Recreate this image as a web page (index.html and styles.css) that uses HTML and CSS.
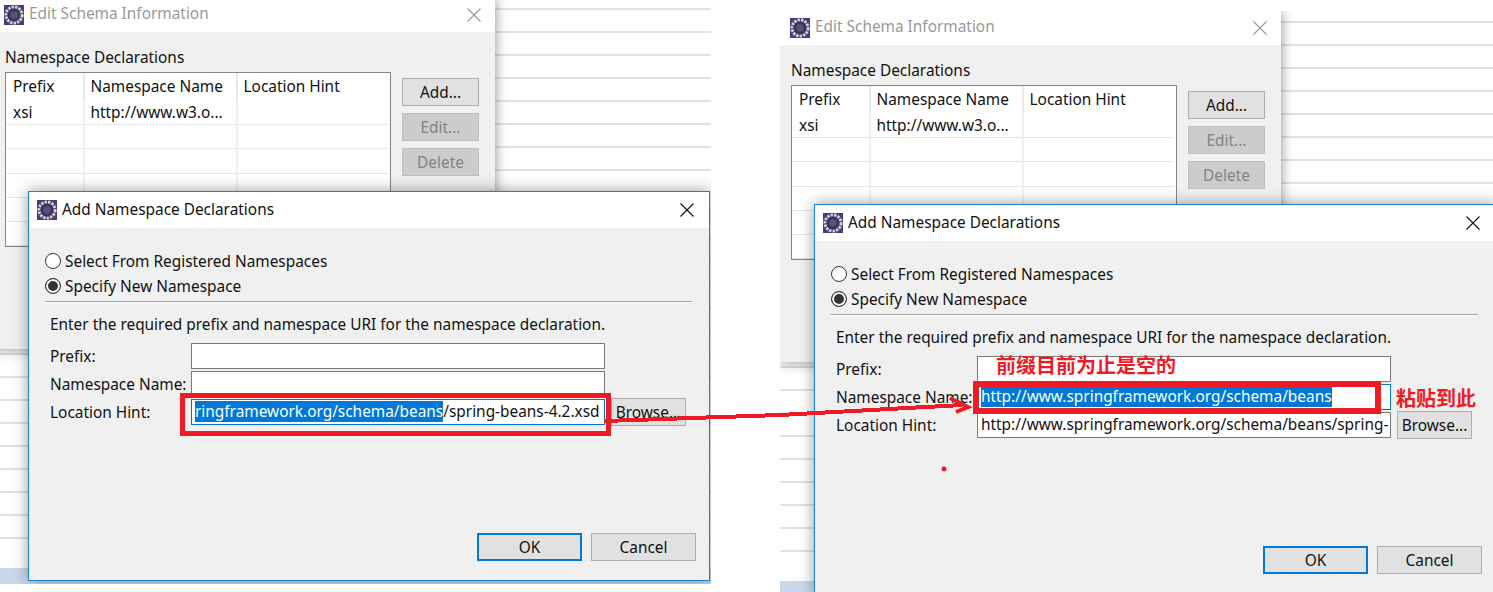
FILE: index.html
```html
<!DOCTYPE html>
<html>
<head>
    <meta charset="utf-8">
    <title>Add Namespace Declarations</title>
    <link rel="stylesheet" href="styles.css">
</head>
<body>
    <svg class="defs" width="0" height="0">
        <symbol id="app" viewBox="0 0 20 20">
            <rect width="20" height="20" fill="#4d3a7d"/>
            <circle cx="10" cy="10" r="8" fill="none" stroke="#d4d4d4" stroke-width="3" stroke-dasharray="2.400 1.100"/>
            <circle cx="10" cy="10" r="6.400" fill="#3a3848"/>
            <circle cx="10" cy="10" r="3.800" fill="#54527e"/>
        </symbol>
        <symbol id="cross" viewBox="0 0 14 14">
            <path d="M.5.5l13 13M13.500.5l-13 13" fill="none" stroke="currentColor" stroke-width="1.1"/>
        </symbol>
    </svg>

    <!-- left capture -->
    <div class="shot shot-left">
        <div class="sheet"></div>
        <div class="band"></div>
        <div class="win back">
            <div class="title">
                <svg class="app"><use href="#app"/></svg>
                <span>Edit Schema Information</span>
                <svg class="close"><use href="#cross"/></svg>
            </div>
            <div class="back-body">
                <p class="caption">Namespace Declarations</p>
                <div class="back-row">
                    <table class="ns">
                        <tr class="head"><th>Prefix</th><th>Namespace Name</th><th>Location Hint</th></tr>
                        <tr><td>xsi</td><td>http://www.w3.o...</td><td></td></tr>
                        <tr><td></td><td></td><td></td></tr>
                        <tr><td></td><td></td><td></td></tr>
                        <tr><td></td><td></td><td></td></tr>
                        <tr><td></td><td></td><td></td></tr>
                        <tr><td></td><td></td><td></td></tr>
                    </table>
                    <div class="side">
                        <div class="btn">Add...</div>
                        <div class="btn off">Edit...</div>
                        <div class="btn off">Delete</div>
                    </div>
                </div>
            </div>
        </div>
        <div class="win dialog">
            <div class="title">
                <svg class="app"><use href="#app"/></svg>
                <span>Add Namespace Declarations</span>
                <svg class="close"><use href="#cross"/></svg>
            </div>
            <div class="dialog-body">
                <div class="radio"><i></i>Select From Registered Namespaces</div>
                <div class="radio on"><i></i>Specify New Namespace</div>
                <div class="rule"></div>
                <p class="desc">Enter the required prefix and namespace URI for the namespace declaration.</p>
                <div class="form">
                    <label>Prefix:</label><div class="field"></div><span></span>
                    <label>Namespace Name:</label><div class="field"></div><span></span>
                    <label>Location Hint:</label>
                    <div class="field focus"><b>ringframework.org/schema/beans</b>/spring-beans-4.2.xsd</div>
                    <div class="btn browse">Browse...</div>
                </div>
                <div class="foot">
                    <div class="btn wide main">OK</div>
                    <div class="btn wide">Cancel</div>
                </div>
            </div>
        </div>
    </div>

    <!-- right capture -->
    <div class="shot shot-right">
        <div class="sheet"></div>
        <div class="band"></div>
        <div class="win back">
            <div class="title">
                <svg class="app"><use href="#app"/></svg>
                <span>Edit Schema Information</span>
                <svg class="close"><use href="#cross"/></svg>
            </div>
            <div class="back-body">
                <p class="caption">Namespace Declarations</p>
                <div class="back-row">
                    <table class="ns">
                        <tr class="head"><th>Prefix</th><th>Namespace Name</th><th>Location Hint</th></tr>
                        <tr><td>xsi</td><td>http://www.w3.o...</td><td></td></tr>
                        <tr><td></td><td></td><td></td></tr>
                        <tr><td></td><td></td><td></td></tr>
                        <tr><td></td><td></td><td></td></tr>
                        <tr><td></td><td></td><td></td></tr>
                        <tr><td></td><td></td><td></td></tr>
                    </table>
                    <div class="side">
                        <div class="btn">Add...</div>
                        <div class="btn off">Edit...</div>
                        <div class="btn off">Delete</div>
                    </div>
                </div>
            </div>
        </div>
        <div class="win dialog">
            <div class="title">
                <svg class="app"><use href="#app"/></svg>
                <span>Add Namespace Declarations</span>
                <svg class="close"><use href="#cross"/></svg>
            </div>
            <div class="dialog-body">
                <div class="radio"><i></i>Select From Registered Namespaces</div>
                <div class="radio on"><i></i>Specify New Namespace</div>
                <div class="rule"></div>
                <p class="desc">Enter the required prefix and namespace URI for the namespace declaration.</p>
                <div class="form">
                    <label>Prefix:</label><div class="field"></div><span></span>
                    <label>Namespace Name:</label>
                    <div class="field focus"><b>http://www.springframework.org/schema/beans</b></div><span></span>
                    <label>Location Hint:</label>
                    <div class="field">http://www.springframework.org/schema/beans/spring-</div>
                    <div class="btn browse">Browse...</div>
                </div>
                <div class="foot">
                    <div class="btn wide main">OK</div>
                    <div class="btn wide">Cancel</div>
                </div>
            </div>
        </div>
    </div>

    <!-- red marks drawn over both captures -->
    <svg class="marks" width="1493" height="592" viewBox="0 0 1493 592">
        <g fill="none" stroke="#ed1c24">
            <rect x="182.500" y="395.500" width="426" height="38" stroke-width="5"/>
            <rect x="976" y="384" width="402" height="27" stroke-width="6"/>
            <path d="M604 421L780 415L962 405" stroke-width="4" shape-rendering="crispEdges"/>
            <path d="M950 398L968 407L956 412" stroke-width="4"/>
        </g>
        <circle cx="944" cy="469" r="2.500" fill="#ed1c24"/>
    </svg>
    <div class="note note-top">前缀目前为止是空的</div>
    <div class="note note-side">粘贴到此</div>
</body>
</html>
```

FILE: styles.css
```css
* {
    margin: 0;
    padding: 0;
    box-sizing: border-box;
}
body {
    background: #fff;
    width: 1493px;
    height: 592px;
    position: relative;
    overflow: hidden;
    font-family: "Noto Sans", "Noto Sans CJK SC", sans-serif;
    font-size: 15.4px;
    color: #111;
}
.defs {
    position: absolute;
}

/* one capture, same inner layout on both sides */
.shot {
    position: absolute;
    overflow: hidden;
    background: #fff;
}
.shot-left {
    left: -6px;
    top: -2px;
    width: 717px;
    height: 586px;
}
.shot-right {
    left: 780px;
    top: 11px;
    width: 713px;
    height: 581px;
}
.sheet {
    height: 570px;
    background: repeating-linear-gradient(#fff 0, #fff 21px, #e2e2e2 21px, #e2e2e2 23px);
    background-position: 0 -11px;
}
.band {
    height: 16px;
    background: #c9d9ea;
}

.win {
    position: absolute;
    background: #f0f0f0;
}
.title {
    display: flex;
    align-items: center;
    background: #fff;
}
.title span {
    margin: -3px 0 0 5px;
}
.app {
    width: 20px;
    height: 20px;
}
.close {
    width: 14px;
    height: 14px;
    margin-left: auto;
}

/* window behind */
.back {
    left: 0;
    top: 0;
    width: 501px;
    height: 351px;
    box-shadow: 0 0 12px rgba(0, 0, 0, .45);
}
.back .title {
    height: 34px;
    padding: 0 14px 0 10px;
    color: #999;
}
.back .close {
    color: #999;
}
.back-body {
    padding: 16px 16px 0 11px;
}
.caption {
    height: 24px;
    line-height: 20px;
}
.back-row {
    display: flex;
    gap: 11px;
}
.ns {
    width: 386px;
    height: 175px;
    background: #fff;
    border: 1px solid #7d8696;
    border-spacing: 0;
    table-layout: fixed;
}
.ns th, .ns td {
    font-weight: normal;
    text-align: left;
    padding: 0 0 1px 5.5px;
    height: 24px;
    border-right: 2px solid #eef2f8;
    border-bottom: 1px solid #e6e6e6;
    white-space: nowrap;
    overflow: hidden;
}
.ns th {
    height: 28px;
    padding-bottom: 1px;
    border-bottom: 0;
    border-right-color: #e8e8e8;
}
.ns th:first-child, .ns td:first-child {
    width: 79px;
    padding-left: 7px;
}
.ns th:nth-child(2), .ns td:nth-child(2) {
    width: 153px;
}
.ns th:last-child, .ns td:last-child {
    border-right-width: 4px;
    border-right-color: #fff;
}
.side {
    padding-top: 6px;
    display: flex;
    flex-direction: column;
    gap: 7px;
}

.btn {
    width: 77px;
    height: 28px;
    line-height: 28px;
    text-align: center;
    background: #e1e1e1;
    border: 1px solid #adadad;
}
.btn.off {
    background: #cccccc;
    border-color: #bfbfbf;
    color: #838383;
}

/* dialog on top */
.dialog {
    left: 34px;
    top: 193px;
    width: 682px;
    height: 390px;
    border: 1px solid #1883d7;
    box-shadow: 0 0 14px rgba(0, 0, 0, .4);
    display: flex;
    flex-direction: column;
}
.dialog .title {
    height: 36px;
    padding: 0 15px 0 8px;
    flex: none;
}
.dialog .title span {
    margin-top: -1px;
}
.dialog-body {
    flex: 1;
    display: flex;
    flex-direction: column;
    padding: 20px 13px 19px 16px;
}
.radio {
    display: flex;
    align-items: center;
    gap: 4px;
    height: 25px;
    padding-top: 2px;
}
.radio i {
    width: 16px;
    height: 16px;
    margin-top: -2px;
    border: 1px solid #333;
    border-radius: 50%;
    background: #fff;
}
.radio.on i {
    background: #333;
    box-shadow: inset 0 0 0 2px #fff;
}
.rule {
    height: 2px;
    margin: 3px 4px 0 0;
    background: #a0a0a0;
    border-bottom: 1px solid #fff;
}
.desc {
    margin: 12px 0 0 5px;
    height: 28px;
    line-height: 20px;
}
.form {
    margin-left: 5px;
    display: grid;
    grid-template-columns: 141px 414px 75px;
    grid-auto-rows: 26px;
    row-gap: 2px;
    align-items: center;
}
.field {
    height: 26px;
    line-height: 24px;
    padding-left: 3px;
    background: #fff;
    border: 1px solid #7a7a7a;
    white-space: nowrap;
    overflow: hidden;
}
.field.focus {
    border-color: #0078d7;
}
.field b {
    font-weight: normal;
    background: #0078d7;
    color: #fff;
}
.browse {
    margin-left: 6px;
    width: 75px;
}
.foot {
    margin-top: auto;
    display: flex;
    justify-content: flex-end;
    gap: 9px;
}
.btn.wide {
    width: 105px;
}
.btn.main {
    border: 2px solid #0078d7;
    line-height: 26px;
}

/* annotations */
.marks {
    position: absolute;
    left: 0;
    top: 0;
}
.note {
    position: absolute;
    color: #ed1c24;
    font-family: "Noto Sans CJK SC", sans-serif;
    font-size: 20px;
    font-weight: 700;
    line-height: 24px;
    white-space: nowrap;
}
.note-top {
    left: 996px;
    top: 353px;
}
.note-side {
    left: 1396px;
    top: 386px;
}
```
